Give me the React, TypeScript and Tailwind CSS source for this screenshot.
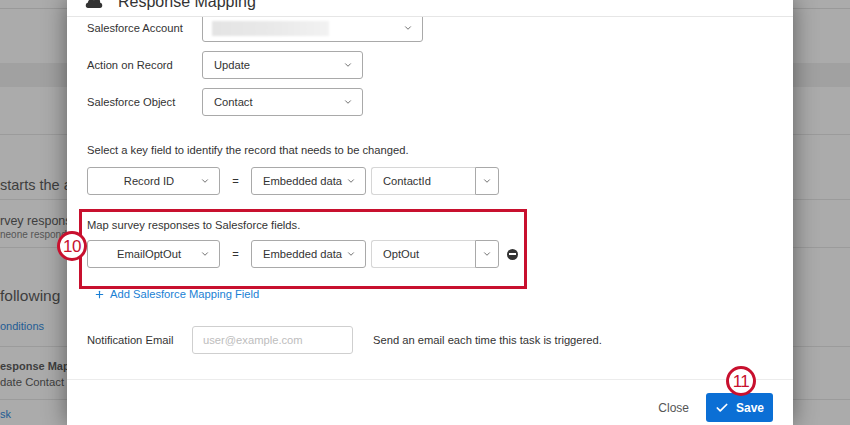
import { ChevronDown, Check, Plus } from 'lucide-react';

const FONT = { fontFamily: '"Liberation Sans", Arial, sans-serif' };

function Select({ label, width, center = false }: { label: string; width: string; center?: boolean }) {
  return (
    <div
      className={`${width} h-[28px] flex items-center border border-[#a9a9a9] rounded-[3px] bg-white text-[11.2px] text-[#333] whitespace-nowrap ${
        center ? 'pl-[10px] pr-[9px]' : 'pl-[11px] pr-[9px] justify-between'
      }`}
    >
      <span className={center ? 'flex-1 text-center' : ''}>{label}</span>
      <ChevronDown className="w-[10px] h-[10px] text-[#555]" strokeWidth={2} />
    </div>
  );
}

function ComboInput({ value }: { value: string }) {
  return (
    <div className="flex h-[28px]">
      <div className="w-[104px] border border-[#d6d6d6] border-r-0 rounded-l-[3px] flex items-center pl-[11px] text-[11.2px] text-[#333]">
        {value}
      </div>
      <div className="w-[24px] border border-[#a9a9a9] rounded-r-[3px] flex items-center justify-center">
        <ChevronDown className="w-[10px] h-[10px] text-[#555]" strokeWidth={2} />
      </div>
    </div>
  );
}

function Badge({ n, className }: { n: string; className: string }) {
  return (
    <div
      className={`absolute z-20 w-[30px] h-[30px] rounded-full bg-white border-[3px] border-[#c8102e] flex items-center justify-center text-[17px] font-medium leading-none text-[#c8102e] tracking-[-0.5px] ${className}`}
    >
      {n}
    </div>
  );
}

function BgPanel({ left }: { left: boolean }) {
  return (
    <div className="h-full flex flex-col bg-[#ababab] text-[#3e3e3e] whitespace-nowrap overflow-hidden">
      <div className="h-[9px] border-b border-[#999] shrink-0" />
      <div className="h-[54px] shrink-0" />
      <div className="h-[24px] bg-[#a1a1a1] shrink-0" />
      <div className="h-[48px] border-b border-[#9b9b9b] shrink-0" />
      <div className="h-[65px] border-b border-[#9b9b9b] shrink-0 flex items-end pb-[2px]">
        {left && <span className="text-[14.5px]">starts the action</span>}
      </div>
      <div className="h-[48px] border-b border-[#9b9b9b] shrink-0 pt-[15px] leading-none">
        {left && (
          <>
            <div className="text-[12.5px]">rvey response</div>
            <div className="text-[10px] text-[#555] mt-[2px]">neone responds</div>
          </>
        )}
      </div>
      <div className="h-[99px] border-b border-[#9b9b9b] shrink-0 pt-[40px] leading-none">
        {left && (
          <>
            <div className="text-[15.5px]">following</div>
            <div className="text-[11px] text-[#1f5c94] mt-[17px]">onditions</div>
          </>
        )}
      </div>
      <div className="h-[53px] border-b border-[#9b9b9b] shrink-0 pt-[14px] leading-none">
        {left && (
          <>
            <div className="text-[11px] font-bold">esponse Mapping</div>
            <div className="text-[11.3px] mt-[5px]">date Contact</div>
          </>
        )}
      </div>
      <div className="flex-1 pt-[9px] leading-none">
        {left && <div className="text-[11px] text-[#1f5c94]">sk</div>}
      </div>
    </div>
  );
}

export default function App() {
  return (
    <div className="w-[850px] h-[425px] flex overflow-hidden relative" style={FONT}>
      <div className="w-[67px] h-full shrink-0">
        <BgPanel left />
      </div>

      <div className="w-[726px] h-full shrink-0 bg-white flex flex-col relative z-10 shadow-[0_0_22px_rgba(0,0,0,0.45)]">
        {/* header, scrolled mostly out of view */}
        <div className="h-[17px] shrink-0 border-b border-[#e6e6e6] overflow-hidden">
          <div className="flex items-center -mt-[12px] pl-[18px] gap-[15px]">
            <svg width="18" height="14" viewBox="0 0 18 14" className="text-[#333]">
              <path d="M3 13 C0 13 0 8 3 7.5 C3 4 8 3 9 5.5 C10 2.5 16 3 15 7.5 C18 8 18 13 15 13 Z" fill="currentColor" />
            </svg>
            <span className="text-[16px] text-[#333] leading-[28px]">Response Mapping</span>
          </div>
        </div>

        {/* body */}
        <div className="flex-1 overflow-hidden pl-[20px]">
          <div className="-mt-[3px] flex flex-col gap-[9px]">
            <div className="flex items-center">
              <span className="w-[115px] text-[11.2px] text-[#333]">Salesforce Account</span>
              <div className="w-[221px] h-[28px] border border-[#a9a9a9] rounded-[3px] flex items-center justify-between pl-[9px] pr-[9px]">
                <div className="w-[117px] h-[15px] bg-gradient-to-r from-[#e4e4e4] via-[#e9e9e9] to-[#f2f2f2] blur-[1px]" />
                <ChevronDown className="w-[10px] h-[10px] text-[#555]" strokeWidth={2} />
              </div>
            </div>
            <div className="flex items-center">
              <span className="w-[115px] text-[11.2px] text-[#333]">Action on Record</span>
              <Select label="Update" width="w-[161px]" />
            </div>
            <div className="flex items-center">
              <span className="w-[115px] text-[11.2px] text-[#333]">Salesforce Object</span>
              <Select label="Contact" width="w-[161px]" />
            </div>
          </div>

          <div className="mt-[26px] text-[11.2px] text-[#333] leading-[16px]">
            Select a key field to identify the record that needs to be changed.
          </div>
          <div className="mt-[9px] flex items-center">
            <Select label="Record ID" width="w-[133px]" center />
            <span className="w-[31px] text-center text-[11.2px] text-[#333]">=</span>
            <Select label="Embedded data" width="w-[115px]" />
            <div className="w-[5px]" />
            <ComboInput value="ContactId" />
          </div>

          <div className="mt-[14px] -ml-[8px] w-[448px] h-[80px] border-[3px] border-[#c8102e] pl-[5px] pt-[5px]">
            <div className="text-[11.2px] text-[#333] leading-[16px]">Map survey responses to Salesforce fields.</div>
            <div className="mt-[7px] flex items-center">
              <Select label="EmailOptOut" width="w-[133px]" center />
              <span className="w-[31px] text-center text-[11.2px] text-[#333]">=</span>
              <Select label="Embedded data" width="w-[115px]" />
              <div className="w-[5px]" />
              <ComboInput value="OptOut" />
              <div className="ml-[8px] w-[11px] h-[11px] rounded-full bg-[#333] flex items-center justify-center">
                <div className="w-[7px] h-[2px] bg-white" />
              </div>
            </div>
          </div>

          <div className="-mt-[3px] ml-[7px] flex items-center gap-[5px] text-[11.2px] text-[#1a7fd4] leading-[16px]">
            <Plus className="w-[11px] h-[11px]" strokeWidth={2.5} />
            <span>Add Salesforce Mapping Field</span>
          </div>

          <div className="mt-[24px] flex items-center">
            <span className="w-[105px] text-[11.2px] text-[#333]">Notification Email</span>
            <div className="w-[161px] h-[28px] border border-[#cfcfcf] rounded-[3px] flex items-center pl-[10px] text-[11.2px] text-[#bdbdbd]">
              user@example.com
            </div>
            <span className="ml-[20px] text-[11.2px] text-[#333]">Send an email each time this task is triggered.</span>
          </div>
        </div>

        <Badge n="10" className="left-[-10px] top-[231px]" />

        {/* footer */}
        <div className="h-[46px] shrink-0 border-t border-[#ececec] flex items-center justify-end pr-[20px] pt-[10px] relative">
          <span className="text-[12px] text-[#555] mr-[17px]">Close</span>
          <div className="w-[67px] h-[29px] bg-[#0b6fd5] rounded-[3px] flex items-center justify-center gap-[7px] text-white text-[12px] font-bold">
            <Check className="w-[14px] h-[14px]" strokeWidth={3} />
            <span>Save</span>
          </div>
          <Badge n="11" className="right-[37px] top-[-14px]" />
        </div>
      </div>

      <div className="flex-1 h-full">
        <BgPanel left={false} />
      </div>
    </div>
  );
}
